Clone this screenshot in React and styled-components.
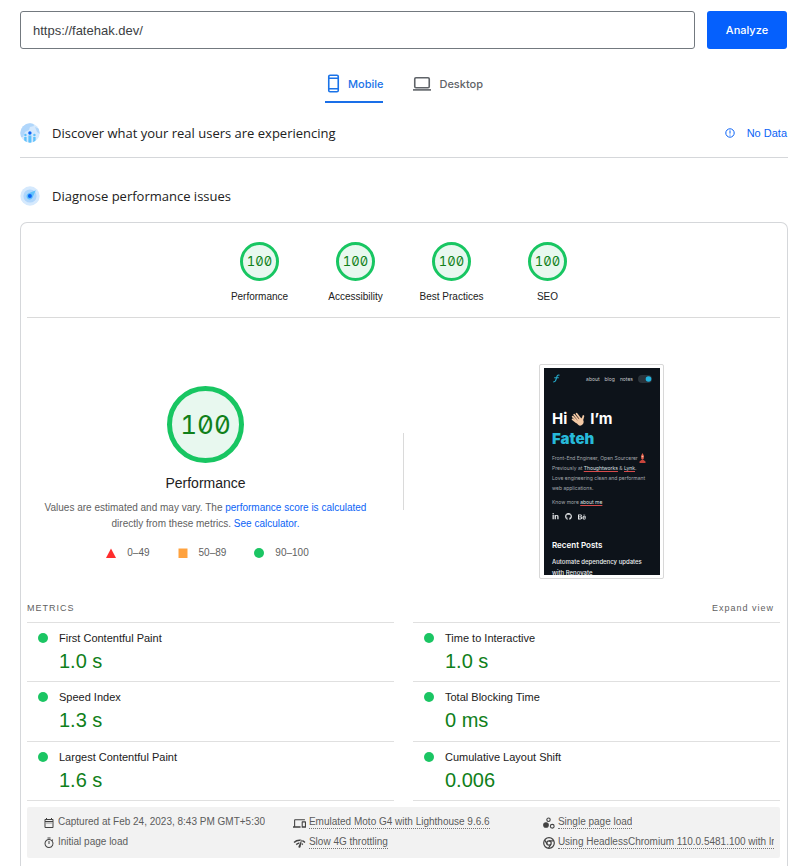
import React from "react";
import styled, { createGlobalStyle, css } from "styled-components";
import { MdDevices, MdNetworkCheck, MdOutlineTimer, MdOutlineDateRange } from "react-icons/md";
import { FaLinkedinIn, FaGithub, FaBehance } from "react-icons/fa";

const GlobalStyle = createGlobalStyle`
  * { box-sizing: border-box; }
  body {
    margin: 0;
    background: #fff;
    color: #212121;
    font-family: "Liberation Sans", Arial, sans-serif;
  }
  h1, h2, h3, p, ul, dl, dd, dt { margin: 0; padding: 0; }
  ul { list-style: none; }
  a { color: #0b63f6; text-decoration: none; }
  button { font: inherit; border: 0; background: none; padding: 0; cursor: pointer; }
  svg { display: block; flex: none; }
`;

const brandFont = css`font-family: Inter, "Open Sans", sans-serif; font-weight: 500;`;

const Page = styled.div`
  display: flex;
  flex-direction: column;
  min-height: 100vh;
  padding: 11px 17px 0 20px;
`;

const SearchForm = styled.form`
  display: flex;
  gap: 12px;
  padding-right: 1px;
`;

const UrlInput = styled.input`
  flex: 1;
  min-width: 0;
  height: 38px;
  padding: 0 12px;
  border: 1px solid #73797f;
  border-radius: 3px;
  color: #3c4043;
  font: 13px "Liberation Sans", Arial, sans-serif;
`;

const AnalyzeButton = styled.button`
  ${brandFont}
  width: 80px;
  border-radius: 3px;
  background: #0560fd;
  color: #fff;
  font-size: 11px;
`;

const Tabs = styled.div`
  display: flex;
  justify-content: center;
  gap: 28px;
  margin-top: 17px;
`;

const Tab = styled.button`
  ${brandFont}
  display: flex;
  align-items: center;
  gap: 8px;
  height: 37px;
  padding: 0 0 0 2px;
  border-bottom: 2px solid ${(p) => (p.$active ? "#1a6fe8" : "transparent")};
  color: ${(p) => (p.$active ? "#1a73e8" : "#5f6368")};
  font-size: 11px;
`;

const SectionHeader = styled.header`
  display: flex;
  align-items: center;
  gap: 12px;
  height: ${(p) => p.$height}px;
  margin-top: ${(p) => p.$top}px;
  padding-right: 1px;
  border-bottom: ${(p) => (p.$ruled ? "1px solid #d5d7da" : "0")};
`;

const SectionTitle = styled.h2`
  flex: 1;
  font-family: "Open Sans", Inter, sans-serif;
  font-size: 13px;
  font-weight: 500;
`;

const NoData = styled.a`
  display: flex;
  align-items: center;
  gap: 12px;
  font-size: 11px;
`;

const Report = styled.main`
  flex: 1;
  padding: 19px 7px 8px 6px;
  border: 1px solid #d5d7da;
  border-bottom: 0;
  border-radius: 7px 7px 0 0;
`;

const GaugeRow = styled.nav`
  display: flex;
  justify-content: center;
  padding-bottom: 14px;
  border-bottom: 1px solid #dadada;
`;

const GaugeLink = styled.a`
  display: flex;
  flex-direction: column;
  align-items: center;
  gap: 9px;
  width: 96px;
  color: #212121;
  font-size: 10px;
  line-height: 13px;
`;

const Gauge = styled.div`
  display: grid;
  place-items: center;
  width: ${(p) => p.$size}px;
  height: ${(p) => p.$size}px;
  border: ${(p) => p.$ring}px solid #18c662;
  border-radius: 50%;
  background: #e8f8ef;
  color: #10801a;
  font-family: Inter, sans-serif;
  font-size: ${(p) => p.$font}px;
  font-feature-settings: "zero" 1, "tnum" 1;
`;

const Summary = styled.section`
  display: grid;
  grid-template-columns: 1fr 1px 1fr;
  gap: 19px;
  align-items: center;
  justify-items: center;
  padding-top: 46px;
`;

const ScoreColumn = styled.div`
  display: flex;
  flex-direction: column;
  align-items: center;
  text-align: center;
  padding-top: 2px;
`;

const ScoreTitle = styled.h1`
  margin-top: 11px;
  font-size: 14px;
  font-weight: 400;
  line-height: 18px;
`;

const Disclaimer = styled.p`
  max-width: 344px;
  margin-top: 8px;
  color: #616161;
  font-size: 10px;
  line-height: 16px;
`;

const Legend = styled.ul`
  display: flex;
  gap: 28px;
  margin-top: 15px;
  padding-left: 4px;
  color: #616161;
  font-size: 10px;
  line-height: 12px;
`;

const LegendItem = styled.li`
  display: flex;
  align-items: center;
  gap: 11px;
`;

const Rule = styled.div`
  width: 1px;
  height: 77px;
  background: #dadada;
`;

const Frame = styled.div`
  width: 125px;
  height: 215px;
  padding: 3px;
  border: 1px solid #d8d8d8;
  border-radius: 2px;
`;

const Phone = styled.div`
  height: 207px;
  margin-left: 1px;
  padding: 6px 8px 0;
  overflow: hidden;
  background: #0d131a;
  color: #a3a8ad;
  font-family: Inter, sans-serif;
  font-size: 5px;
  line-height: 10px;
`;

const PhoneNav = styled.div`
  display: flex;
  align-items: center;
  gap: 5px;
  height: 9px;
  color: #c4c8cc;
  svg:first-child { margin-right: auto; }
`;

const PhoneTitle = styled.div`
  margin: 26px 0 4px;
  color: #fff;
  font-size: 15px;
  font-weight: 700;
  line-height: 20px;
  div { display: flex; align-items: center; gap: 4px; }
  strong { display: block; color: #27b9d9; }
`;

const PhoneLine = styled.p`
  display: flex;
  white-space: pre;
  u { color: #dfe2e5; text-decoration: underline 1px #d64a4a; }
`;

const PhoneSocial = styled.div`
  display: flex;
  gap: 6px;
  margin-top: 6px;
  color: #e6e8ea;
`;

const PhoneHeading = styled.h3`
  margin-top: 18px;
  color: #fff;
  font-size: 8px;
  font-weight: 600;
  line-height: 12px;
`;

const PhonePost = styled.p`
  margin-top: 5px;
  color: #eceef0;
  font-size: 6px;
  font-weight: 500;
  line-height: 11px;
`;

const KnowMore = styled(PhoneLine)`margin-top: 4px;`;

const MetricsHeader = styled.div`
  display: flex;
  align-items: center;
  justify-content: space-between;
  margin-top: 19px;
  height: 24px;
  padding: 0 6px 4px 0;
  color: #616161;
  font-size: 9px;
  letter-spacing: 1px;
`;

const MetricsTitle = styled.h2`
  font-size: 9px;
  font-weight: 400;
`;

const ExpandButton = styled.button`
  color: #616161;
  letter-spacing: 1px;
`;

const Metrics = styled.div`
  display: grid;
  grid-template-columns: 1fr 1fr;
  column-gap: 19px;
`;

const MetricList = styled.dl`
  border-bottom: 1px solid #e0e0e0;
`;

const Metric = styled.div`
  display: grid;
  grid-template-columns: 10px 1fr;
  grid-template-rows: 14px 26px;
  column-gap: 11px;
  row-gap: 3px;
  align-items: center;
  height: 59px;
  padding: 8px 11px 0;
  border-top: 1px solid #e0e0e0;
  font-size: 11px;
  &:nth-child(2) { height: 60px; }
`;

const Dot = styled.span`
  width: 10px;
  height: 10px;
  border-radius: 50%;
  background: #1bc563;
`;

const MetricValue = styled.dd`
  grid-column: 2;
  color: #10801a;
  font-size: 20px;
`;

const Environment = styled.ul`
  display: grid;
  grid-template-columns: 14fr 14fr 13fr;
  row-gap: 6px;
  margin-top: 6px;
  padding: 8px 5px 9px 16px;
  border-radius: 2px;
  background: #f2f2f2;
  color: #5c5c5c;
  font-size: 10px;
  line-height: 14px;
`;

const EnvItem = styled.li`
  display: flex;
  align-items: center;
  gap: 3px;
  min-width: 0;
  height: 14px;
  color: #424242;
  svg { margin-top: 2px; }
`;

const EnvText = styled.span`
  min-width: 0;
  overflow: hidden;
  white-space: nowrap;
  color: #5c5c5c;
  line-height: 12px;
  border-bottom: 1px ${(p) => (p.$dotted ? "dotted #757575" : "solid transparent")};
`;

const PhoneIcon = () => (
  <svg width="13" height="19" viewBox="0 0 13 19" fill="none" stroke="currentColor">
    <rect x="1.75" y="1.25" width="9.5" height="16.5" rx="1.3" strokeWidth="1.6" />
    <path d="M2 4.2h9M2 14.8h9" strokeWidth="1.4" />
  </svg>
);

const LaptopIcon = () => (
  <svg width="18" height="15" viewBox="0 0 18 15" fill="none" stroke="currentColor">
    <rect x="1.75" y="1.75" width="14.5" height="10" rx="1.2" strokeWidth="1.6" />
    <path d="M0 13.9h18" strokeWidth="1.6" />
  </svg>
);

const UsersIcon = () => (
  <svg width="20" height="20" viewBox="0 0 20 20">
    <clipPath id="users-disc"><circle cx="10" cy="10" r="9.7" /></clipPath>
    <g clipPath="url(#users-disc)">
      <rect width="20" height="20" fill="#d5e9fd" />
      <path d="M0 0h13l1 3-4 1-1 3-4 2-2 5-3 0zM15 4l5 2v5l-3-2z" fill="#b0d6fb" />
      <path d="M4.2 14h2.4v6H4.2zM8.4 12.6h3V20h-3zM13.2 14h2.4v6h-2.4z" fill="#5ec1fb" />
      <circle cx="5.4" cy="12" r="1.2" fill="#5ec1fb" />
      <circle cx="14.4" cy="12" r="1.2" fill="#5ec1fb" />
      <circle cx="9.9" cy="10" r="1.7" fill="#0b63f6" />
    </g>
  </svg>
);

const DiagnoseIcon = () => (
  <svg width="20" height="20" viewBox="0 0 20 20">
    <circle cx="10" cy="10" r="9.7" fill="#d5e9fd" />
    <circle cx="10" cy="10" r="6.6" fill="#b0d6fb" />
    <path d="M15.8 4.2L12.4 12a3.2 3.2 0 1 1-4.3-4.5z" fill="#5ec1fb" />
    <circle cx="9.9" cy="10" r="2" fill="#0b63f6" />
  </svg>
);

const NoticeIcon = () => (
  <svg width="10" height="10" viewBox="0 0 10 10" fill="none" stroke="currentColor">
    <circle cx="5" cy="5" r="4.2" />
    <path d="M5 2.4v3.2M5 6.6v1" />
  </svg>
);

const RunsIcon = () => (
  <svg width="12" height="12" viewBox="0 0 24 24" fill="none" stroke="currentColor" strokeWidth="2.2">
    <circle cx="6" cy="16" r="4.6" fill="currentColor" />
    <circle cx="11" cy="5.5" r="3.4" />
    <circle cx="18.5" cy="18.5" r="3.8" />
  </svg>
);

const ChromeIcon = () => (
  <svg width="12" height="12" viewBox="0 0 24 24" fill="none" stroke="currentColor" strokeWidth="2.4">
    <circle cx="12" cy="12" r="10.6" />
    <circle cx="12" cy="12" r="4.4" />
    <path d="M12 7.6h9.5M8.2 14.2L3.4 6M15.8 14.2L11 22.5" />
  </svg>
);

const Triangle = () => (
  <svg width="10" height="10" viewBox="0 0 10 10"><path d="M5 0.5L10 10H0z" fill="#ff2d2d" /></svg>
);
const Square = () => (
  <svg width="10" height="10" viewBox="0 0 10 10"><path d="M0.5 0.5H9.5V10H0.5z" fill="#ffa23e" /></svg>
);

const SiteLogo = () => (
  <svg width="9" height="9" viewBox="0 0 9 9" fill="none" stroke="#25a9c9" strokeWidth="1.1">
    <path d="M7.5 1.2C5.3 0.6 5 2 4.4 4.4S3.3 8.2 1.3 7.8M2.2 3.7h4.6" />
  </svg>
);

const ThemeSwitch = () => (
  <svg width="14" height="8" viewBox="0 0 14 8">
    <rect width="14" height="8" rx="4" fill="#29323a" />
    <circle cx="10.5" cy="4" r="2.8" fill="#22b4df" />
  </svg>
);

const WaveIcon = () => (
  <svg width="15" height="15" viewBox="0 0 15 15" fill="none" strokeLinecap="round">
    <path d="M7.5 8L3.2 2.8M6 8.8L1.7 4.6M9.5 7L5.6 1.8M5.4 10.2L1.6 7.4M11.2 8.2L12.4 4" stroke="#f3c9a5" strokeWidth="1.8" />
    <path d="M4.6 9.4L10 5.6l2.4 3c.8 2.2-.6 4.6-2.6 5-1.7.3-3.7-1.3-5.2-4.2z" fill="#f3c9a5" />
    <path d="M6.2 8.3L3.8 5.5M8 7L5.5 3.9" stroke="#a9704f" strokeWidth=".5" />
  </svg>
);

const FlameIcon = () => (
  <svg width="7" height="10" viewBox="0 0 7 10">
    <path d="M3.5 0L5 3 4.6 6H2.4L2 3z" fill="#e2604d" />
    <path d="M.5 8.5L3.5 6l3 2.5V10h-6z" fill="#c9453c" />
    <circle cx="3.5" cy="3.5" r=".8" fill="#f7c1a5" />
  </svg>
);

const categories = ["Performance", "Accessibility", "Best Practices", "SEO"];

const metricColumns = [
  [["First Contentful Paint", "1.0 s"], ["Speed Index", "1.3 s"], ["Largest Contentful Paint", "1.6 s"]],
  [["Time to Interactive", "1.0 s"], ["Total Blocking Time", "0 ms"], ["Cumulative Layout Shift", "0.006"]],
];

const environment = [
  [<MdOutlineDateRange size={12} />, "Captured at Feb 24, 2023, 8:43 PM GMT+5:30", false],
  [<MdDevices size={13} />, "Emulated Moto G4 with Lighthouse 9.6.6", true],
  [<RunsIcon />, "Single page load", true],
  [<MdOutlineTimer size={12} />, "Initial page load", false],
  [<MdNetworkCheck size={13} />, "Slow 4G throttling", true],
  [<ChromeIcon />, "Using HeadlessChromium 110.0.5481.100 with lr", true],
];

function Preview() {
  return (
    <Frame>
      <Phone>
        <PhoneNav>
          <SiteLogo />
          <span>about</span><span>blog</span><span>notes</span>
          <ThemeSwitch />
        </PhoneNav>
        <PhoneTitle>
          <div>Hi <WaveIcon /> I’m</div>
          <strong>Fateh</strong>
        </PhoneTitle>
        <PhoneLine>Front-End Engineer, Open Sourcerer <FlameIcon /></PhoneLine>
        <PhoneLine>Previously at <u>Thoughtworks</u> &amp; <u>Lynk</u>.</PhoneLine>
        <PhoneLine>Love engineering clean and performant</PhoneLine>
        <PhoneLine>web applications.</PhoneLine>
        <KnowMore>Know more <u>about me</u></KnowMore>
        <PhoneSocial><FaLinkedinIn size={7} /><FaGithub size={7} /><FaBehance size={8} /></PhoneSocial>
        <PhoneHeading>Recent Posts</PhoneHeading>
        <PhonePost>Automate dependency updates with Renovate</PhonePost>
      </Phone>
    </Frame>
  );
}

export default function App() {
  return (
    <>
      <GlobalStyle />
      <Page>
        <SearchForm onSubmit={(e) => e.preventDefault()}>
          <UrlInput type="text" aria-label="Web page URL" defaultValue="https://fatehak.dev/" />
          <AnalyzeButton type="submit">Analyze</AnalyzeButton>
        </SearchForm>
        <Tabs role="tablist">
          <Tab role="tab" aria-selected="true" $active><PhoneIcon />Mobile</Tab>
          <Tab role="tab" aria-selected="false"><LaptopIcon />Desktop</Tab>
        </Tabs>
        <SectionHeader $top={6} $height={49} $ruled>
          <UsersIcon />
          <SectionTitle>Discover what your real users are experiencing</SectionTitle>
          <NoData href="#no-data"><NoticeIcon />No Data</NoData>
        </SectionHeader>
        <SectionHeader $top={12} $height={52}>
          <DiagnoseIcon />
          <SectionTitle>Diagnose performance issues</SectionTitle>
        </SectionHeader>
        <Report>
          <GaugeRow aria-label="Categories">
            {categories.map((name) => (
              <GaugeLink key={name} href={"#" + name.toLowerCase().replace(" ", "-")}>
                <Gauge $size={39} $ring={3} $font={13}>100</Gauge>
                {name}
              </GaugeLink>
            ))}
          </GaugeRow>
          <Summary id="performance">
            <ScoreColumn>
              <Gauge $size={77} $ring={5} $font={26}>100</Gauge>
              <ScoreTitle>Performance</ScoreTitle>
              <Disclaimer>
                Values are estimated and may vary. The <a href="#scoring">performance score is calculated</a><br />
                directly from these metrics. <a href="#calculator">See calculator.</a>
              </Disclaimer>
              <Legend>
                <LegendItem><Triangle />0–49</LegendItem>
                <LegendItem><Square />50–89</LegendItem>
                <LegendItem><Dot />90–100</LegendItem>
              </Legend>
            </ScoreColumn>
            <Rule />
            <Preview />
          </Summary>
          <MetricsHeader>
            <MetricsTitle>METRICS</MetricsTitle>
            <ExpandButton type="button">Expand view</ExpandButton>
          </MetricsHeader>
          <Metrics>
            {metricColumns.map((column, i) => (
              <MetricList key={i}>
                {column.map(([name, value]) => (
                  <Metric key={name}>
                    <Dot />
                    <dt>{name}</dt>
                    <MetricValue>{value}</MetricValue>
                  </Metric>
                ))}
              </MetricList>
            ))}
          </Metrics>
          <Environment>
            {environment.map(([icon, text, dotted]) => (
              <EnvItem key={text}>{icon}<EnvText $dotted={dotted}>{text}</EnvText></EnvItem>
            ))}
          </Environment>
        </Report>
      </Page>
    </>
  );
}
